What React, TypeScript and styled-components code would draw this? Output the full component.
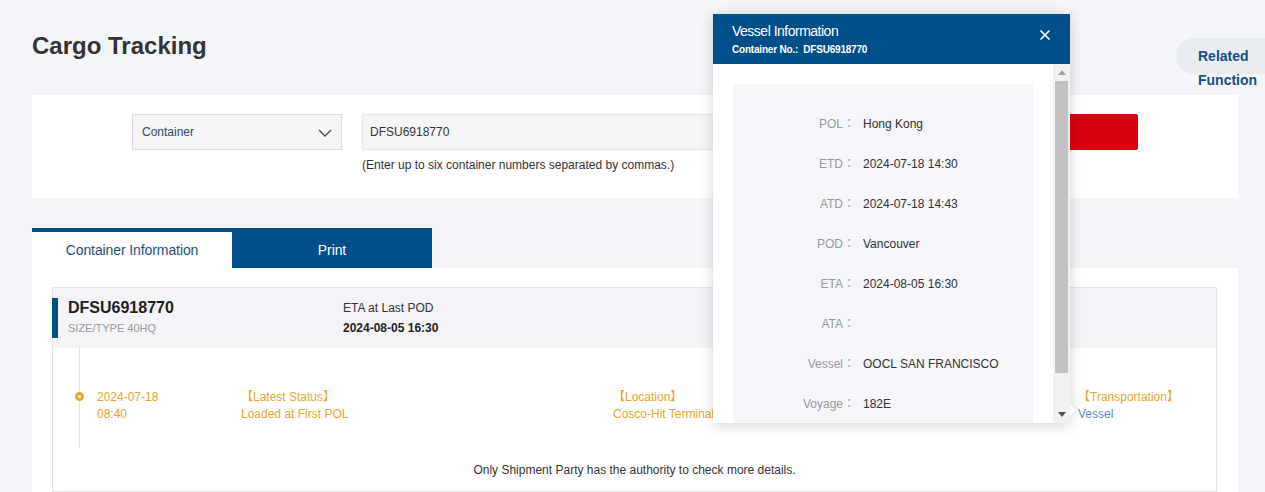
import { FC } from 'react';
import styled, { createGlobalStyle, css } from 'styled-components';

const BLUE = '#004f8b';
const GOLD = '#e5a530';
const FONT = `"Liberation Sans", Arial, "Noto Sans CJK JP", sans-serif`;

type InfoItem = { label: string; value: string };

const VESSEL_INFO: InfoItem[] = [
	{ label: 'POL', value: 'Hong Kong' },
	{ label: 'ETD', value: '2024-07-18 14:30' },
	{ label: 'ATD', value: '2024-07-18 14:43' },
	{ label: 'POD', value: 'Vancouver' },
	{ label: 'ETA', value: '2024-08-05 16:30' },
	{ label: 'ATA', value: '' },
	{ label: 'Vessel', value: 'OOCL SAN FRANCISCO' },
	{ label: 'Voyage', value: '182E' },
];

const GlobalStyle = createGlobalStyle`
	html, body {
		margin: 0;
		padding: 0;
		overflow: hidden;
		background: #f4f5f8;
	}
	* {
		box-sizing: border-box;
	}
	body {
		font-family: ${FONT};
		color: #333;
	}
`;

const ChevronDown: FC = () => (
	<svg width="14" height="8" viewBox="0 0 14 8" fill="none">
		<path d="M1 1l6 6 6-6" stroke="#555" strokeWidth="1.5" />
	</svg>
);

const CloseIcon: FC = () => (
	<svg width="12" height="12" viewBox="0 0 12 12" fill="none">
		<path d="M1.5 1.5l9 9M10.5 1.5l-9 9" stroke="#fff" strokeWidth="1.6" />
	</svg>
);

const Arrow: FC<{ up?: boolean; color: string }> = ({ up, color }) => (
	<svg width="8" height="5" viewBox="0 0 8 5">
		<path d={up ? 'M0 5L4 0L8 5Z' : 'M0 0L8 0L4 5Z'} fill={color} />
	</svg>
);

const App: FC = () => {
	return (
		<>
			<GlobalStyle />
			<Page>
				<Title>Cargo Tracking</Title>
				<SearchCard>
					<SelectBox>
						<span>Container</span>
						<ChevronDown />
					</SelectBox>
					<InputGroup>
						<TextInput>DFSU6918770</TextInput>
						<Hint>(Enter up to six container numbers separated by commas.)</Hint>
					</InputGroup>
					<SearchButton>Search</SearchButton>
				</SearchCard>

				<Tabs>
					<Tab active>Container Information</Tab>
					<Tab>Print</Tab>
				</Tabs>

				<Panel>
					<ContainerBox>
						<BoxHeader>
							<AccentBar />
							<HeaderBlock width={275}>
								<ContainerNo>DFSU6918770</ContainerNo>
								<SizeType>SIZE/TYPE 40HQ</SizeType>
							</HeaderBlock>
							<HeaderBlock>
								<EtaLabel>ETA at Last POD</EtaLabel>
								<EtaValue>2024-08-05 16:30</EtaValue>
							</HeaderBlock>
						</BoxHeader>

						<Timeline>
							<TimelineItem>
								<Dot />
								<EventCol>
									<EventLine>2024-07-18</EventLine>
									<EventLine>08:40</EventLine>
								</EventCol>
								<EventCol>
									<EventLine>【Latest Status】</EventLine>
									<EventLine>Loaded at First POL</EventLine>
								</EventCol>
								<EventCol>
									<EventLine>【Location】</EventLine>
									<EventLine>Cosco-Hit Terminal</EventLine>
								</EventCol>
								<EventCol offset={2}>
									<EventLine>【Transportation】</EventLine>
									<EventLine link>Vessel</EventLine>
								</EventCol>
							</TimelineItem>
						</Timeline>

						<Notice>Only Shipment Party has the authority to check more details.</Notice>
					</ContainerBox>
				</Panel>

				<RelatedFunction>Related Function</RelatedFunction>

				<VesselPopup>
					<PopupHeader>
						<PopupTitle>Vessel Information</PopupTitle>
						<PopupSubtitle>Container No.:&nbsp; DFSU6918770</PopupSubtitle>
						<CloseButton>
							<CloseIcon />
						</CloseButton>
					</PopupHeader>
					<PopupBody>
						<ScrollArea>
							<InfoBox>
								{VESSEL_INFO.map((item) => (
									<InfoRow key={item.label}>
										<InfoLabel>{item.label}：</InfoLabel>
										<InfoValue>{item.value}</InfoValue>
									</InfoRow>
								))}
							</InfoBox>
						</ScrollArea>
						<Scrollbar>
							<ScrollButton>
								<Arrow up color="#a3a3a3" />
							</ScrollButton>
							<ScrollThumb />
							<ScrollSpacer />
							<ScrollButton>
								<Arrow color="#505050" />
							</ScrollButton>
						</Scrollbar>
					</PopupBody>
				</VesselPopup>
			</Page>
		</>
	);
};

const Page = styled.div`
	position: relative;
	width: 1265px;
	height: 492px;
	overflow: hidden;
	padding: 32px 27px 0 32px;
	display: flex;
	flex-direction: column;
	font-family: ${FONT};
`;

const Title = styled.h1`
	margin: 0 0 35px;
	font-size: 24px;
	line-height: 28px;
	font-weight: bold;
	color: #333;
`;

const SearchCard = styled.div`
	display: flex;
	align-items: flex-start;
	height: 103px;
	padding: 19px 100px 0;
	background: #fff;
`;

const fieldCSS = css`
	height: 36px;
	display: flex;
	align-items: center;
	background: #f5f5f8;
	border: 1px solid #dcdcdf;
	font-size: 12px;
	line-height: 17px;
`;

const SelectBox = styled.div`
	${fieldCSS};
	width: 210px;
	justify-content: space-between;
	padding: 1px 9px 0 9px;
	color: #2e4b68;
`;

const InputGroup = styled.div`
	margin-left: 20px;
	width: 560px;
`;

const TextInput = styled.div`
	${fieldCSS};
	border-color: #e6e6ea;
	padding: 1px 7px 0;
	color: #333;
`;

const Hint = styled.div`
	margin-top: 7px;
	font-size: 12px;
	line-height: 17px;
	color: #333;
`;

const SearchButton = styled.div`
	margin-left: 20px;
	width: 196px;
	height: 36px;
	background: #d7000f;
	border-radius: 2px;
	color: #fff;
	font-size: 14px;
	display: flex;
	align-items: center;
	justify-content: center;
`;

const Tabs = styled.div`
	display: flex;
	margin-top: 30px;
`;

const Tab = styled.div<{ active?: boolean }>`
	width: 200px;
	height: 40px;
	border-top: 4px solid ${BLUE};
	display: flex;
	align-items: center;
	justify-content: center;
	font-size: 14px;
	letter-spacing: -0.1px;
	background: ${(props) => (props.active ? '#fff' : BLUE)};
	color: ${(props) => (props.active ? '#1f4e7d' : '#fff')};
`;

const Panel = styled.div`
	flex: 1;
	background: #fff;
	padding: 19px 21px 0 20px;
`;

const ContainerBox = styled.div`
	border: 1px solid #e4e4e8;
`;

const BoxHeader = styled.div`
	height: 60px;
	display: flex;
	align-items: center;
	background: #f4f4f8;
`;

const AccentBar = styled.div`
	width: 6px;
	height: 40px;
	margin-left: -1px;
	margin-right: 10px;
	background: ${BLUE};
`;

const HeaderBlock = styled.div<{ width?: number }>`
	display: flex;
	flex-direction: column;
	gap: 2px;
	${(props) =>
		props.width &&
		css`
			width: ${props.width}px;
		`}
`;

const ContainerNo = styled.div`
	font-size: 16px;
	line-height: 18px;
	font-weight: bold;
	color: #1e1e1e;
`;

const SizeType = styled.div`
	font-size: 11px;
	line-height: 18px;
	color: #999;
`;

const EtaLabel = styled.div`
	font-size: 12px;
	line-height: 18px;
	color: #333;
`;

const EtaValue = styled(EtaLabel)`
	font-weight: bold;
	color: #222;
`;

const Timeline = styled.div`
	margin-left: 26px;
	height: 100px;
	border-left: 1px solid #e4e4e4;
`;

const TimelineItem = styled.div`
	position: relative;
	display: grid;
	grid-template-columns: 144px 372px 463px 1fr;
	padding: 41px 0 0 17px;
	font-size: 12px;
	color: ${GOLD};
`;

const Dot = styled.span`
	position: absolute;
	left: -5px;
	top: 44px;
	width: 9px;
	height: 9px;
	border-radius: 50%;
	border: 3px solid ${GOLD};
	background: #fff;
`;

const EventCol = styled.div<{ offset?: number }>`
	white-space: nowrap;
	padding-left: ${(props) => props.offset ?? 0}px;
`;

const EventLine = styled.div<{ link?: boolean }>`
	height: 17px;
	line-height: 17px;
	overflow: visible;
	${(props) =>
		props.link &&
		css`
			color: #5d8ad6;
		`}
`;

const Notice = styled.div`
	margin-top: 14px;
	padding-bottom: 12px;
	text-align: center;
	font-size: 12px;
	line-height: 17px;
	color: #333;
`;

const RelatedFunction = styled.div`
	position: absolute;
	top: 38px;
	right: 0;
	width: 89px;
	height: 36px;
	padding: 6px 0 0 22px;
	border-radius: 18px 0 0 18px;
	background: #e9edf2;
	font-size: 14px;
	line-height: 24px;
	font-weight: bold;
	color: #144f8c;
`;

const VesselPopup = styled.div`
	position: absolute;
	left: 713px;
	top: 14px;
	width: 357px;
	height: 409px;
	background: #fff;
	box-shadow: 0 2px 12px rgba(0, 0, 0, 0.18);
	display: flex;
	flex-direction: column;

	&::after {
		content: '';
		position: absolute;
		right: -6px;
		top: 390px;
		border-left: 6px solid #fff;
		border-top: 6px solid transparent;
		border-bottom: 6px solid transparent;
		filter: drop-shadow(2px 0 1px rgba(0, 0, 0, 0.06));
	}
`;

const PopupHeader = styled.div`
	position: relative;
	height: 50px;
	padding: 9px 19px 0;
	background: ${BLUE};
	color: #fff;
`;

const PopupTitle = styled.div`
	font-size: 14px;
	line-height: 16px;
	letter-spacing: -0.5px;
`;

const PopupSubtitle = styled.div`
	margin-top: 4px;
	font-size: 10px;
	line-height: 14px;
	font-weight: bold;
	letter-spacing: -0.2px;
`;

const CloseButton = styled.div`
	position: absolute;
	right: 19px;
	top: 15px;
	width: 12px;
	height: 12px;
	display: flex;
`;

const PopupBody = styled.div`
	flex: 1;
	display: flex;
	min-height: 0;
`;

const ScrollArea = styled.div`
	flex: 1;
	overflow: hidden;
	padding: 20px 20px 0;
`;

const InfoBox = styled.div`
	width: 300px;
	padding-top: 20px;
	background: #f5f5fa;
`;

const InfoRow = styled.div`
	height: 40px;
	display: flex;
	align-items: center;
	font-size: 12px;
	line-height: 17px;
`;

const InfoLabel = styled.div`
	width: 122px;
	height: 17px;
	text-align: right;
	color: #999;
	white-space: nowrap;
`;

const InfoValue = styled.div`
	margin-left: 8px;
	height: 17px;
	color: #333;
`;

const Scrollbar = styled.div`
	width: 17px;
	display: flex;
	flex-direction: column;
	background: #f1f1f1;
`;

const ScrollButton = styled.div`
	height: 17px;
	display: flex;
	align-items: center;
	justify-content: center;
`;

const ScrollThumb = styled.div`
	height: 292px;
	margin: 0 2px;
	background: #c1c1c1;
`;

const ScrollSpacer = styled.div`
	flex: 1;
`;

export default App;
